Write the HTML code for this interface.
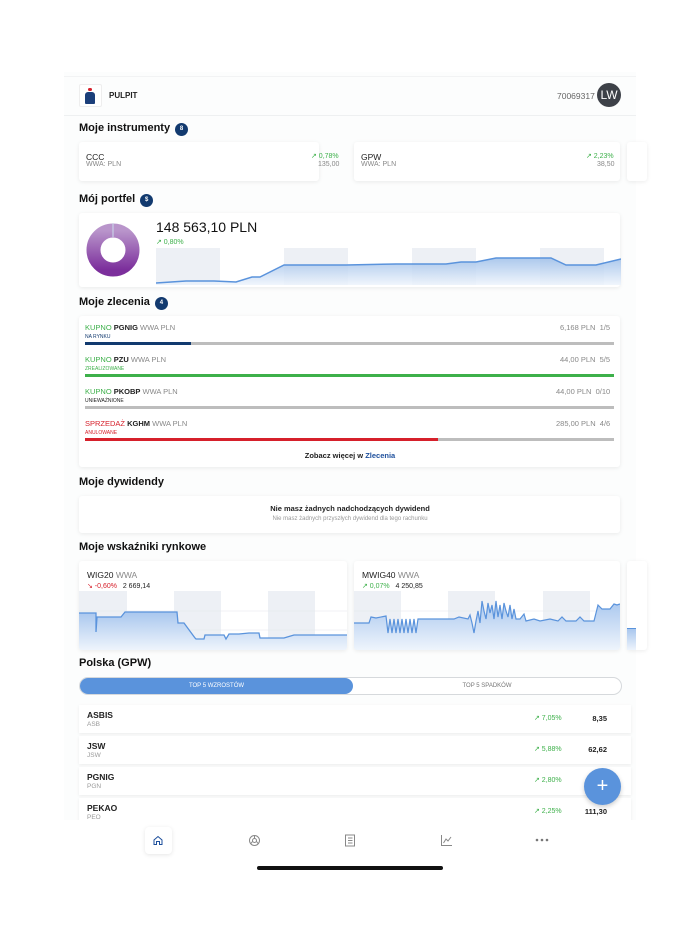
<!DOCTYPE html>
<html><head><meta charset="utf-8"><style>
*{margin:0;padding:0;box-sizing:border-box}
body{width:700px;height:934px;background:#fff;font-family:"Liberation Sans",sans-serif;color:#222;position:relative;overflow:hidden}
.a{position:absolute}
.app{left:64px;top:72px;width:572px;height:800px;background:#fcfdfd}
.card{position:absolute;background:#fff;border-radius:3px;box-shadow:0 1px 4px rgba(0,0,0,.08)}
.h{position:absolute;font-size:11px;color:#111;font-weight:600}
.badge{display:inline-block;width:13px;height:13px;border-radius:50%;background:#123a6f;color:#fff;font-size:6px;text-align:center;line-height:13px;vertical-align:1px;margin-left:5px}
.g{color:#3db04a}.r{color:#d6202b}.m{color:#888}
.s{font-size:7px}
.bar{position:absolute;height:3px;background:#bdbdbd;left:85px;width:529px}
.bar i{display:block;height:3px}
.row{position:absolute;left:79px;width:552px;height:28px;background:#fff;box-shadow:0 1px 3px rgba(0,0,0,.07)}
.row b{position:absolute;left:8px;top:5px;font-size:8.5px;font-weight:600}
.row em{position:absolute;left:8px;top:16px;font-size:6.5px;color:#999;font-style:normal}
.row .p{position:absolute;left:455px;top:9px;font-size:7px;color:#3db04a}
.row .v{position:absolute;right:24px;top:9px;font-size:7.5px;font-weight:600}
</style></head><body>
<div class="a app"></div>
<div class="a" style="left:64px;top:76px;width:572px;height:40px;background:#fcfdfd;border-top:1px solid #f2f3f4;border-bottom:1px solid #eef0f1"></div>
<div class="a" style="left:79px;top:84px;width:23px;height:23px;background:#fff;border:1px solid #eee;border-radius:2px"></div>
<div class="a" style="left:88px;top:88px;width:4px;height:3px;background:#d6202b;border-radius:2px"></div>
<div class="a" style="left:85px;top:92px;width:10px;height:12px;background:#1b3f7a;border-radius:3px 3px 1px 1px"></div>
<div class="a" style="left:109px;top:91px;font-size:8px;font-weight:600">PULPIT</div>
<div class="a" style="left:557px;top:91px;font-size:8.5px;color:#666">70069317</div>
<div class="a" style="left:597px;top:83px;width:24px;height:24px;border-radius:50%;background:#3d4148;color:#fff;font-size:12px;text-align:center;line-height:24px">LW</div>

<div class="h" style="left:79px;top:122px">Moje instrumenty<span class="badge">8</span></div>
<div class="card" style="left:79px;top:142px;width:240px;height:39px"></div>
<div class="a" style="left:86px;top:152px;font-size:8.5px">CCC</div>
<div class="a s m" style="left:86px;top:161px">WWA: PLN</div>
<div class="a s g" style="left:311px;top:152px">↗ 0,78%</div>
<div class="a s m" style="left:318px;top:161px">135,00</div>
<div class="card" style="left:354px;top:142px;width:266px;height:39px"></div>
<div class="a" style="left:361px;top:152px;font-size:8.5px">GPW</div>
<div class="a s m" style="left:361px;top:161px">WWA: PLN</div>
<div class="a s g" style="left:586px;top:152px">↗ 2,23%</div>
<div class="a s m" style="left:597px;top:161px">38,50</div>
<div class="card" style="left:627px;top:142px;width:20px;height:39px"></div>

<div class="h" style="left:79px;top:193px">Mój portfel<span class="badge">$</span></div>
<div class="card" style="left:79px;top:213px;width:541px;height:74px"></div>
<svg class="a" style="left:86px;top:223px" width="54" height="54"><defs><linearGradient id="dg" x1="0" y1="0" x2="0" y2="1"><stop offset="0" stop-color="#b995cb"/><stop offset="1" stop-color="#7c2f9c"/></linearGradient></defs><circle cx="27" cy="27" r="19.5" fill="none" stroke="url(#dg)" stroke-width="14"/><line x1="27" y1="0" x2="27" y2="14" stroke="#cde" stroke-width="1"/></svg>
<div class="a" style="left:156px;top:219px;font-size:14px;color:#111">148 563,10 PLN</div>
<div class="a s g" style="left:156px;top:238px">↗ 0,80%</div>
<svg class="a" style="left:156px;top:248px" width="465" height="38"><defs><linearGradient id="pg" x1="0" y1="0" x2="0" y2="1"><stop offset="0" stop-color="#9ebfe9"/><stop offset="1" stop-color="#eef4fc"/></linearGradient></defs>
<rect x="0" y="0" width="64" height="37" fill="#edf0f5"/><rect x="128" y="0" width="64" height="37" fill="#edf0f5"/><rect x="256" y="0" width="64" height="37" fill="#edf0f5"/><rect x="384" y="0" width="64" height="37" fill="#edf0f5"/>
<path d="M0 35 L30 33 L58 33 L80 34 L96 29 L104 29 L128 17 L190 17 L240 16 L290 16 L305 14 L320 14 L340 10 L395 10 L410 17 L440 17 L465 11 L465 37 L0 37Z" fill="url(#pg)" opacity=".85"/>
<path d="M0 35 L30 33 L58 33 L80 34 L96 29 L104 29 L128 17 L190 17 L240 16 L290 16 L305 14 L320 14 L340 10 L395 10 L410 17 L440 17 L465 11" fill="none" stroke="#5a93dc" stroke-width="1.5"/></svg>

<div class="h" style="left:79px;top:296px">Moje zlecenia<span class="badge">4</span></div>
<div class="card" style="left:79px;top:316px;width:541px;height:151px"></div>
<div class="a" style="left:85px;top:323px;font-size:7.5px"><span class="g">KUPNO</span> <b style="font-weight:600">PGNIG</b> <span class="m">WWA PLN</span></div>
<div class="a m" style="left:560px;top:323px;font-size:7.5px">6,168 PLN &nbsp;1/5</div>
<div class="a" style="left:85px;top:334px;font-size:5px;color:#123a6f">NA RYNKU</div>
<div class="bar" style="top:342px"><i style="width:106px;background:#123a6f"></i></div>
<div class="a" style="left:85px;top:355px;font-size:7.5px"><span class="g">KUPNO</span> <b style="font-weight:600">PZU</b> <span class="m">WWA PLN</span></div>
<div class="a m" style="left:560px;top:355px;font-size:7.5px">44,00 PLN &nbsp;5/5</div>
<div class="a g" style="left:85px;top:366px;font-size:5px">ZREALIZOWANE</div>
<div class="bar" style="top:374px"><i style="width:529px;background:#3db04a"></i></div>
<div class="a" style="left:85px;top:387px;font-size:7.5px"><span class="g">KUPNO</span> <b style="font-weight:600">PKOBP</b> <span class="m">WWA PLN</span></div>
<div class="a m" style="left:556px;top:387px;font-size:7.5px">44,00 PLN &nbsp;0/10</div>
<div class="a" style="left:85px;top:398px;font-size:5px">UNIEWAŻNIONE</div>
<div class="bar" style="top:406px"></div>
<div class="a" style="left:85px;top:419px;font-size:7.5px"><span class="r">SPRZEDAŻ</span> <b style="font-weight:600">KGHM</b> <span class="m">WWA PLN</span></div>
<div class="a m" style="left:556px;top:419px;font-size:7.5px">285,00 PLN &nbsp;4/6</div>
<div class="a r" style="left:85px;top:430px;font-size:5px">ANULOWANE</div>
<div class="bar" style="top:438px"><i style="width:353px;background:#d6202b"></i></div>
<div class="a" style="left:0;width:700px;text-align:center;top:451px;font-size:7.5px;font-weight:600">Zobacz więcej w <span style="color:#1d4f9c">Zlecenia</span></div>

<div class="h" style="left:79px;top:476px">Moje dywidendy</div>
<div class="card" style="left:79px;top:496px;width:541px;height:37px"></div>
<div class="a" style="left:0;width:700px;text-align:center;top:504px;font-size:7.5px;font-weight:600">Nie masz żadnych nadchodzących dywidend</div>
<div class="a" style="left:0;width:700px;text-align:center;top:516px;font-size:6px;color:#999">Nie masz żadnych przyszłych dywidend dla tego rachunku</div>

<div class="h" style="left:79px;top:541px">Moje wskaźniki rynkowe</div>
<div class="card" style="left:79px;top:561px;width:268px;height:89px;overflow:hidden">
<div class="a" style="left:8px;top:9px;font-size:8.5px">WIG20 <span class="m">WWA</span></div>
<div class="a s" style="left:8px;top:21px"><span class="r">↘ -0,60%</span> &nbsp; 2 669,14</div>
<svg class="a" style="left:0;top:30px" width="268" height="59"><defs><linearGradient id="wg" x1="0" y1="0" x2="0" y2="1"><stop offset="0" stop-color="#a9c7ee"/><stop offset="1" stop-color="#eef4fc"/></linearGradient></defs>
<rect x="0" y="0" width="48" height="59" fill="#edf0f5"/><rect x="95" y="0" width="47" height="59" fill="#edf0f5"/><rect x="189" y="0" width="47" height="59" fill="#edf0f5"/>
<line x1="0" y1="20" x2="268" y2="20" stroke="#e3e6ea" stroke-width=".6"/><line x1="0" y1="39" x2="268" y2="39" stroke="#e3e6ea" stroke-width=".6"/>
<path d="M0 22 L17 22 L17 41 L18 26 L42 26 L46 21 L98 21 L99 32 L105 32 L116 47 L117 48 L125 48 L126 44 L145 44 L147 48 L150 43 L160 43 L170 42 L180 42 L181 47 L205 47 L215 44 L268 44 L268 59 L0 59Z" fill="url(#wg)"/>
<path d="M0 22 L17 22 L17 41 L18 26 L42 26 L46 21 L98 21 L99 32 L105 32 L116 47 L117 48 L125 48 L126 44 L145 44 L147 48 L150 43 L160 43 L170 42 L180 42 L181 47 L205 47 L215 44 L268 44" fill="none" stroke="#5a93dc" stroke-width="1.3"/></svg></div>
<div class="card" style="left:354px;top:561px;width:266px;height:89px;overflow:hidden">
<div class="a" style="left:8px;top:9px;font-size:8.5px">MWIG40 <span class="m">WWA</span></div>
<div class="a s" style="left:8px;top:21px"><span class="g">↗ 0,07%</span> &nbsp; 4 250,85</div>
<svg class="a" style="left:0;top:30px" width="266" height="59"><defs><linearGradient id="mg" x1="0" y1="0" x2="0" y2="1"><stop offset="0" stop-color="#a9c7ee"/><stop offset="1" stop-color="#eef4fc"/></linearGradient></defs>
<rect x="0" y="0" width="47" height="59" fill="#edf0f5"/><rect x="94" y="0" width="47" height="59" fill="#edf0f5"/><rect x="189" y="0" width="47" height="59" fill="#edf0f5"/>
<line x1="0" y1="20" x2="266" y2="20" stroke="#e3e6ea" stroke-width=".6"/><line x1="0" y1="39" x2="266" y2="39" stroke="#e3e6ea" stroke-width=".6"/>
<path d="M0 32 L15 32 L17 26 L22 27 L32 25 L34 42 L36 28 L38 42 L40 28 L42 42 L44 28 L46 42 L48 28 L50 42 L52 28 L54 42 L56 28 L58 42 L60 28 L62 42 L64 28 L66 28 L100 28 L105 26 L114 28 L116 24 L118 32 L120 42 L122 30 L124 20 L126 32 L128 10 L130 20 L132 28 L134 12 L136 22 L138 14 L140 28 L142 10 L144 26 L146 14 L148 28 L150 12 L152 20 L154 26 L156 14 L158 28 L160 18 L162 28 L166 28 L170 23 L172 30 L180 28 L186 30 L196 28 L204 30 L208 26 L212 30 L222 30 L226 26 L230 30 L240 30 L244 14 L248 18 L256 18 L260 13 L263 14 L266 13 L266 59 L0 59Z" fill="url(#mg)"/>
<path d="M0 32 L15 32 L17 26 L22 27 L32 25 L34 42 L36 28 L38 42 L40 28 L42 42 L44 28 L46 42 L48 28 L50 42 L52 28 L54 42 L56 28 L58 42 L60 28 L62 42 L64 28 L66 28 L100 28 L105 26 L114 28 L116 24 L118 32 L120 42 L122 30 L124 20 L126 32 L128 10 L130 20 L132 28 L134 12 L136 22 L138 14 L140 28 L142 10 L144 26 L146 14 L148 28 L150 12 L152 20 L154 26 L156 14 L158 28 L160 18 L162 28 L166 28 L170 23 L172 30 L180 28 L186 30 L196 28 L204 30 L208 26 L212 30 L222 30 L226 26 L230 30 L240 30 L244 14 L248 18 L256 18 L260 13 L263 14 L266 13" fill="none" stroke="#5a93dc" stroke-width="1.2"/></svg></div>
<div class="card" style="left:627px;top:561px;width:20px;height:89px"></div>
<div class="a" style="left:627px;top:628px;width:9px;height:22px;background:linear-gradient(#a9c7ee,#eef4fc);border-top:1.5px solid #5a93dc"></div>

<div class="h" style="left:79px;top:657px">Polska (GPW)</div>
<div class="a" style="left:79px;top:677px;width:543px;height:18px;border:1px solid #d6d9dc;border-radius:9px;background:#fff"></div>
<div class="a" style="left:80px;top:678px;width:273px;height:16px;border-radius:8px;background:#5a93dc;color:#fff;font-size:6px;text-align:center;line-height:16px">TOP 5 WZROSTÓW</div>
<div class="a" style="left:353px;top:678px;width:268px;height:16px;color:#777;font-size:6px;text-align:center;line-height:16px">TOP 5 SPADKÓW</div>

<div class="row" style="top:705px"><b>ASBIS</b><em>ASB</em><span class="p">↗ 7,05%</span><span class="v">8,35</span></div>
<div class="row" style="top:736px"><b>JSW</b><em>JSW</em><span class="p">↗ 5,88%</span><span class="v">62,62</span></div>
<div class="row" style="top:767px"><b>PGNIG</b><em>PGN</em><span class="p">↗ 2,80%</span></div>
<div class="row" style="top:798px"><b>PEKAO</b><em>PEO</em><span class="p">↗ 2,25%</span><span class="v">111,30</span></div>
<div class="a" style="left:584px;top:768px;width:37px;height:37px;border-radius:50%;background:#5a93dc;color:#fff;font-size:20px;text-align:center;line-height:36px;box-shadow:0 2px 5px rgba(0,0,0,.2)">+</div>

<div class="a" style="left:0;top:820px;width:700px;height:114px;background:#fff"></div>
<div class="a" style="left:145px;top:827px;width:27px;height:27px;border-radius:4px;background:#fff;box-shadow:0 1px 4px rgba(0,0,0,.1)"></div>
<svg class="a" style="left:152px;top:834px" width="12" height="12" fill="none" stroke="#1d4f9c" stroke-width="1"><path d="M2 6 L6 2.5 L10 6 L10 10.5 L7.5 10.5 L7.5 7.5 L4.5 7.5 L4.5 10.5 L2 10.5Z"/></svg>
<svg class="a" style="left:248px;top:834px" width="13" height="13" fill="none" stroke="#888" stroke-width="1"><circle cx="6.5" cy="6.5" r="5"/><circle cx="6.5" cy="6.5" r="2"/><path d="M6.5 1.5V4.5M4.5 7.5L2.5 10M8.5 7.5L10.5 10"/></svg>
<svg class="a" style="left:344px;top:834px" width="12" height="13" fill="none" stroke="#888" stroke-width="1"><path d="M1.5 1 H10.5 V12 H1.5Z M4 4H8.5M4 6.5H8.5M4 9H8.5"/></svg>
<svg class="a" style="left:440px;top:834px" width="13" height="13" fill="none" stroke="#888" stroke-width="1"><path d="M1.5 1V11.5H12M3.5 9L6 5L8 7L11 3"/></svg>
<svg class="a" style="left:535px;top:838px" width="14" height="4" fill="#777"><circle cx="2" cy="2" r="1.3"/><circle cx="7" cy="2" r="1.3"/><circle cx="12" cy="2" r="1.3"/></svg>
<div class="a" style="left:257px;top:866px;width:186px;height:4px;border-radius:2px;background:#111"></div>
</body></html>
